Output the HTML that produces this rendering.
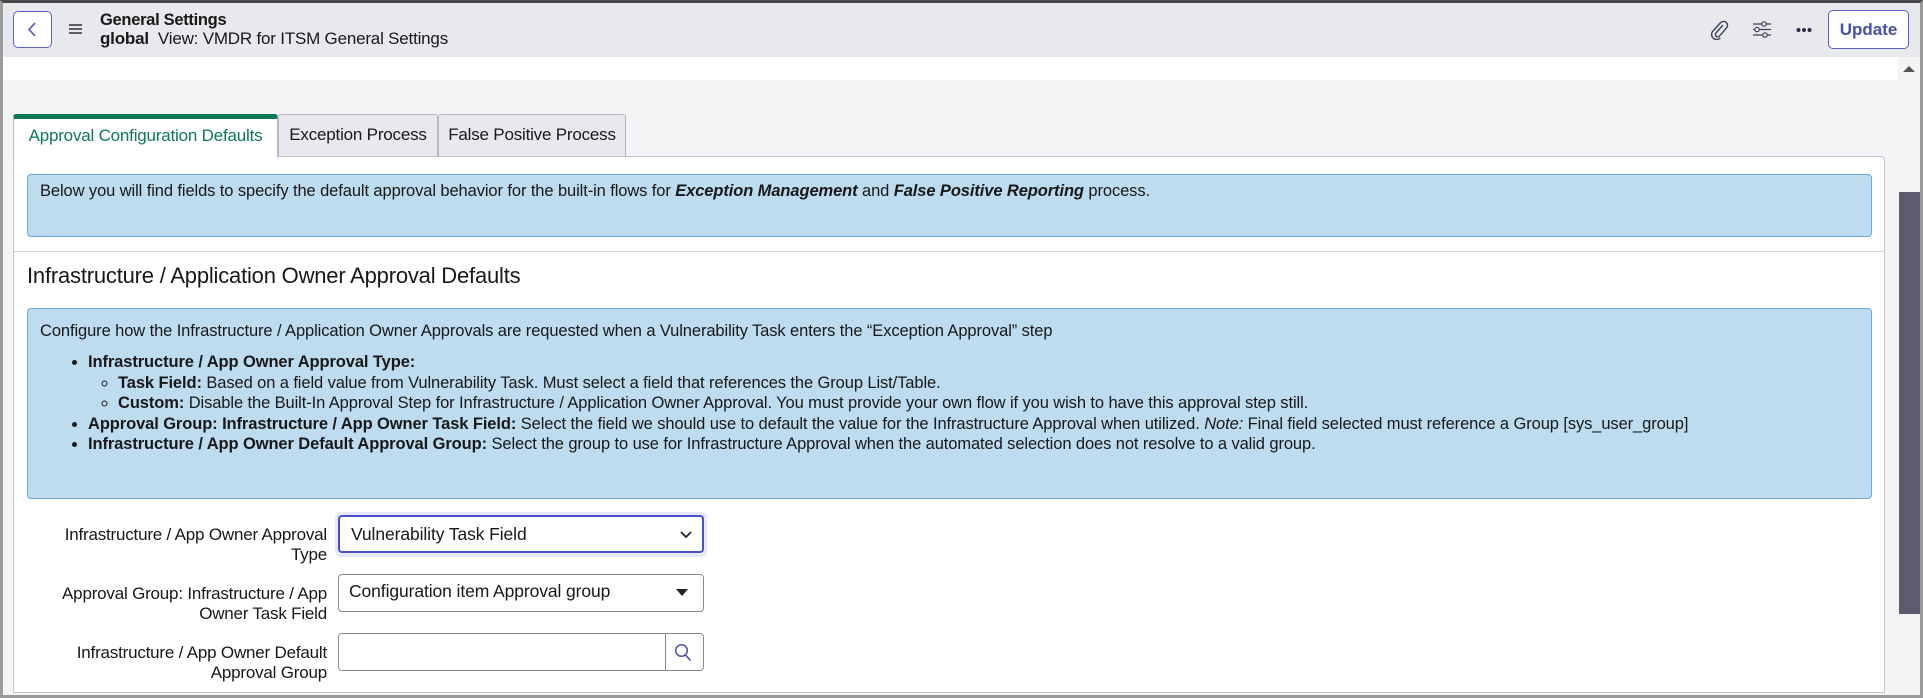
<!DOCTYPE html>
<html><head><meta charset="utf-8"><style>
*{box-sizing:border-box;margin:0;padding:0}
body{width:1923px;height:698px;overflow:hidden;background:#f4f4f6;font-family:"Liberation Sans",sans-serif;color:#181818;position:relative}
.a{position:absolute}
#frame{left:0;top:0;width:1923px;height:698px;border:3px solid #9a9a9a;border-top:3px solid #4a4a4a;pointer-events:none;z-index:10}
#hdr{left:0;top:0;width:1923px;height:57px;background:#e8e9ed}
#strip{left:0;top:57px;width:1898px;height:23px;background:#fff}
.btn{border:1px solid #5b5fc7;border-radius:4px;background:#fff}
.tab{top:114px;height:43px;border:1px solid #b8b8c4;border-bottom:none;background:#e8e9ed;font-size:17px;display:flex;align-items:center;justify-content:center;border-radius:3px 3px 0 0;letter-spacing:-0.2px;padding-bottom:2px}
#panel{left:13px;top:156px;width:1872px;height:537px;background:#fff;border:1px solid #c4c4d0;border-radius:0 4px 0 0}
.info{background:#bddcf0;border:1px solid #6aa9d8;border-radius:4px;font-size:16.5px;letter-spacing:-0.1px}
.lbl{font-size:17px;text-align:right;width:300px;line-height:19.5px;letter-spacing:-0.2px}
.fld{border:1px solid #8a8a96;border-radius:4px;background:#fff;font-size:17.5px;letter-spacing:-0.1px;display:flex;align-items:center;padding-left:10px}
ul{margin:0}
li{line-height:20.5px}
</style></head><body>
<div class="a" id="hdr"></div>
<div class="a btn" style="left:13px;top:11px;width:39px;height:37px;border-radius:5px"><svg width="37" height="35" viewBox="0 0 37 35"><path d="M21 11l-6 6.5 6 6.5" fill="none" stroke="#4a4fa8" stroke-width="1.5"/></svg></div>
<svg class="a" style="left:69px;top:23px" width="14" height="12"><path d="M0 2h13M0 6h13M0 10h13" stroke="#333" stroke-width="1.4"/></svg>
<div class="a" style="left:100px;top:11px;font-size:16.5px;font-weight:bold;letter-spacing:-0.3px">General Settings</div>
<div class="a" style="left:100px;top:29px;font-size:17px;letter-spacing:-0.2px"><b>global</b>&nbsp; View: VMDR for ITSM General Settings</div>
<svg class="a" style="left:1709px;top:18px" width="20" height="22" viewBox="0 0 20 22"><path d="M14 7l-7 8a2.3 2.3 0 0 0 3.3 3.2l7.5-8.5a4 4 0 0 0-5.8-5.4L4 13a5 5 0 0 0 7.2 7" fill="none" stroke="#3f3f5a" stroke-width="1.4"/></svg>
<svg class="a" style="left:1752px;top:21px" width="20" height="17"><path d="M1 3h18M1 8.5h18M1 14h18" stroke="#3f3f5a" stroke-width="1.3"/><circle cx="12" cy="3" r="2.2" fill="#e8e9ed" stroke="#3f3f5a" stroke-width="1.2"/><circle cx="5" cy="8.5" r="2.2" fill="#e8e9ed" stroke="#3f3f5a" stroke-width="1.2"/><circle cx="13" cy="14" r="2.2" fill="#e8e9ed" stroke="#3f3f5a" stroke-width="1.2"/></svg>
<svg class="a" style="left:1796px;top:27px" width="16" height="6"><circle cx="2.5" cy="3" r="2" fill="#2a2a44"/><circle cx="8" cy="3" r="2" fill="#2a2a44"/><circle cx="13.5" cy="3" r="2" fill="#2a2a44"/></svg>
<div class="a btn" style="left:1828px;top:10px;width:81px;height:39px;font-size:17px;color:#4a4fa8;display:flex;align-items:center;justify-content:center;font-weight:bold;border-radius:5px">Update</div>
<div class="a" id="strip"></div>
<svg class="a" style="left:1903px;top:65px" width="12" height="8"><path d="M0 7L6 1l6 6z" fill="#555"/></svg>
<div class="a" style="left:1899px;top:192px;width:21px;height:422px;background:#5d5c6e"></div>

<div class="a tab" style="left:13px;width:265px;background:#fff;color:#0d7a55;border-top:5px solid #0a7a55;z-index:2;height:44px;padding-bottom:6px">Approval Configuration Defaults</div>
<div class="a tab" style="left:278px;width:160px">Exception Process</div>
<div class="a tab" style="left:438px;width:188px">False Positive Process</div>
<div class="a" id="panel"></div>

<div class="a info" style="left:27px;top:174px;width:1845px;height:63px;padding:7px 12px">Below you will find fields to specify the default approval behavior for the built-in flows for <b><i>Exception Management</i></b> and <b><i>False Positive Reporting</i></b> process.</div>
<div class="a" style="left:14px;top:251px;width:1870px;height:1px;background:#d4d4dc"></div>
<div class="a" style="left:27px;top:263px;font-size:22px;letter-spacing:-0.2px">Infrastructure / Application Owner Approval Defaults</div>

<div class="a info" style="left:27px;top:308px;width:1845px;height:191px;padding:12px 12px">
<div style="line-height:20px">Configure how the Infrastructure / Application Owner Approvals are requested when a Vulnerability Task enters the “Exception Approval” step</div>
<ul style="padding-left:48px;margin-top:11px">
<li><b>Infrastructure / App Owner Approval Type:</b>
<ul style="list-style:circle;padding-left:30px"><li><b>Task Field:</b> Based on a field value from Vulnerability Task. Must select a field that references the Group List/Table.</li>
<li><b>Custom:</b> Disable the Built-In Approval Step for Infrastructure / Application Owner Approval. You must provide your own flow if you wish to have this approval step still.</li></ul></li>
<li><b>Approval Group: Infrastructure / App Owner Task Field:</b> Select the field we should use to default the value for the Infrastructure Approval when utilized. <i>Note:</i> Final field selected must reference a Group [sys_user_group]</li>
<li><b>Infrastructure / App Owner Default Approval Group:</b> Select the group to use for Infrastructure Approval when the automated selection does not resolve to a valid group.</li>
</ul></div>

<div class="a lbl" style="left:27px;top:525px">Infrastructure / App Owner Approval<br>Type</div>
<div class="a" style="left:335px;top:512px;width:372px;height:45px;background:#e6e8fb;border-radius:6px"></div>
<div class="a fld" style="left:338px;top:515px;width:366px;height:38px;border:2px solid #4a4fd0;padding-left:11px">Vulnerability Task Field
<svg class="a" style="right:10px;top:14px" width="12" height="8"><path d="M1 1l5 5 5-5" fill="none" stroke="#222" stroke-width="1.8"/></svg></div>

<div class="a lbl" style="left:27px;top:584px">Approval Group: Infrastructure / App<br>Owner Task Field</div>
<div class="a fld" style="left:338px;top:574px;width:366px;height:38px;padding-bottom:4px">Configuration item Approval group
<svg class="a" style="right:15px;top:14px" width="12" height="8"><path d="M0 0h12L6 7z" fill="#222"/></svg></div>

<div class="a lbl" style="left:27px;top:643px">Infrastructure / App Owner Default<br>Approval Group</div>
<div class="a fld" style="left:338px;top:633px;width:366px;height:38px">
<div class="a" style="left:326px;top:0;width:1px;height:36px;background:#8a8a96"></div>
<svg class="a" style="left:335px;top:9px" width="18" height="19"><circle cx="7.5" cy="7.5" r="5.8" fill="none" stroke="#4a4fa8" stroke-width="1.5"/><path d="M11.5 12l5 5.5" stroke="#4a4fa8" stroke-width="1.6"/></svg></div>

<div class="a" id="frame"></div>
</body></html>
